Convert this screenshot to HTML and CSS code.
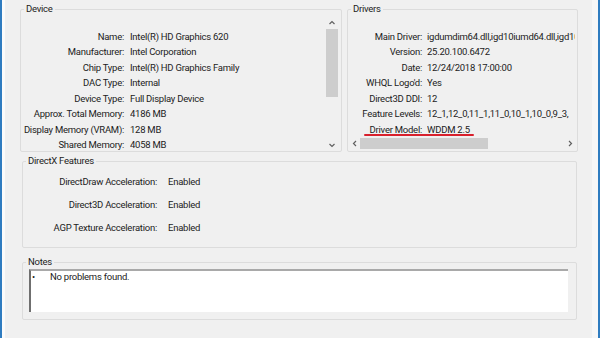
FILE: index.html
```html
<!DOCTYPE html>
<html lang="en">
<head>
  <meta charset="UTF-8">
  <meta name="viewport" content="width=device-width, initial-scale=1.0">
  <title>DirectX Diagnostic Tool - Display</title>
  <link rel="stylesheet" href="styles.css">
</head>
<body>
  <div class="window">
    <div class="top">
      <fieldset class="group device">
        <legend>Device</legend>
        <div class="pane">
          <div class="props">
            <span class="key">Name:</span><span class="val">Intel(R) HD Graphics 620</span>
            <span class="key">Manufacturer:</span><span class="val">Intel Corporation</span>
            <span class="key">Chip Type:</span><span class="val">Intel(R) HD Graphics Family</span>
            <span class="key">DAC Type:</span><span class="val">Internal</span>
            <span class="key">Device Type:</span><span class="val">Full Display Device</span>
            <span class="key">Approx. Total Memory:</span><span class="val">4186 MB</span>
            <span class="key">Display Memory (VRAM):</span><span class="val">128 MB</span>
            <span class="key">Shared Memory:</span><span class="val">4058 MB</span>
          </div>
          <div class="vscroll">
            <svg class="arrow" width="14" height="12" viewBox="0 0 14 12"><polyline points="4.5,7 7,4.5 9.5,7" fill="none" stroke="#606060" stroke-width="1.2"/></svg>
            <div class="vthumb"></div>
            <div class="vspace"></div>
            <svg class="arrow" width="14" height="10" viewBox="0 0 14 10"><polyline points="4.5,4 7,6.5 9.5,4" fill="none" stroke="#606060" stroke-width="1.2"/></svg>
          </div>
        </div>
      </fieldset>

      <fieldset class="group drivers">
        <legend>Drivers</legend>
        <div class="props">
          <span class="key">Main Driver:</span><span class="val">igdumdim64.dll,igd10iumd64.dll,igd10</span>
          <span class="key">Version:</span><span class="val">25.20.100.6472</span>
          <span class="key">Date:</span><span class="val">12/24/2018 17:00:00</span>
          <span class="key">WHQL Logo'd:</span><span class="val">Yes</span>
          <span class="key">Direct3D DDI:</span><span class="val">12</span>
          <span class="key">Feature Levels:</span><span class="val">12_1,12_0,11_1,11_0,10_1,10_0,9_3,</span>
          <span class="key">Driver Model:</span><span class="val">WDDM 2.5</span>
          <span class="redline"></span>
        </div>
        <div class="hscroll">
          <svg class="arrow" width="10" height="13" viewBox="0 0 10 13"><polyline points="6,4 3.5,6.5 6,9" fill="none" stroke="#606060" stroke-width="1.2"/></svg>
          <div class="hthumb"></div>
          <div class="hspace"></div>
          <svg class="arrow" width="10" height="13" viewBox="0 0 10 13"><polyline points="4,4 6.5,6.5 4,9" fill="none" stroke="#606060" stroke-width="1.2"/></svg>
        </div>
      </fieldset>
    </div>

    <fieldset class="group features">
      <legend>DirectX Features</legend>
      <div class="props">
        <span class="key">DirectDraw Acceleration:</span><span class="val">Enabled</span>
        <span class="key">Direct3D Acceleration:</span><span class="val">Enabled</span>
        <span class="key">AGP Texture Acceleration:</span><span class="val">Enabled</span>
      </div>
    </fieldset>

    <fieldset class="group notes">
      <legend>Notes</legend>
      <div class="notebox">
        <div class="note"><span class="bullet">&bull;</span>No problems found.</div>
      </div>
    </fieldset>
  </div>
</body>
</html>
```

FILE: styles.css
```css
* {
  box-sizing: border-box;
}
body {
  margin: 0;
  background: #f0f0f0;
  font-family: Roboto, "Liberation Sans", sans-serif;
  font-size: 9.5px;
  letter-spacing: -0.25px;
  color: #222;
}
.window {
  height: 338px;
  border-left: 2px solid #2f7cc0;
  border-right: 2px solid #2f7cc0;
  padding: 3px 20px 0 18px;
  box-shadow: inset 3px 0 #fbfbfb, inset -6px 0 #f7f7f7;
}
.top {
  display: flex;
  gap: 5px;
}
.group {
  margin: 0;
  padding: 0;
  min-width: 0;
  border: 1px solid #dcdcdc;
  border-radius: 2px;
}
legend {
  margin-left: 3px;
  padding: 0 2px;
  line-height: 12px;
}
.props {
  display: grid;
  line-height: 15.5px;
  white-space: nowrap;
  overflow: hidden;
}
.key {
  text-align: right;
}
.val {
  overflow: hidden;
}

/* device */
.device {
  width: 322px;
  height: 149px;
}
.pane {
  display: flex;
  height: 136px;
}
.device .props {
  flex: 1;
  padding-top: 13.5px;
  grid-template-columns: 103px 1fr;
  column-gap: 6px;
}
.vscroll {
  width: 14px;
  margin: 2px 2px 1px 0;
  display: flex;
  flex-direction: column;
}
.vthumb {
  height: 68px;
  margin: 0 1px;
  background: #cdcdcd;
}
.vspace {
  flex: 1;
}

/* drivers */
.drivers {
  flex: 1;
  height: 149px;
}
.drivers .props {
  position: relative;
  padding-top: 13.5px;
  margin-right: 2px;
  grid-template-columns: 74px 1fr;
  column-gap: 5px;
}
.redline {
  position: absolute;
  left: 16px;
  top: 119px;
  width: 110px;
  height: 2px;
  border-radius: 1px;
  background: #d8202c;
}
.hscroll {
  display: flex;
  height: 13px;
  margin: 0 2px;
}
.hthumb {
  width: 128px;
  margin: 1px 0;
  background: #cdcdcd;
}
.hspace {
  flex: 1;
}

/* directx features */
.features {
  margin: 3px 1px 0 2px;
  height: 93px;
}
.features .props {
  padding-top: 2.5px;
  line-height: 23px;
  grid-template-columns: 134px 1fr;
  column-gap: 11px;
}

/* notes */
.notes {
  margin: 8px 1px 0 2px;
  height: 64px;
}
.notebox {
  margin: 1px 8px 0 6px;
  height: 43px;
  background: #fff;
  border-top: 2px solid #a9a9a9;
  border-left: 2px solid #6f6f6f;
}
.note {
  padding: 0 0 0 1px;
  line-height: 11px;
}
.bullet {
  display: inline-block;
  width: 18px;
}
```
